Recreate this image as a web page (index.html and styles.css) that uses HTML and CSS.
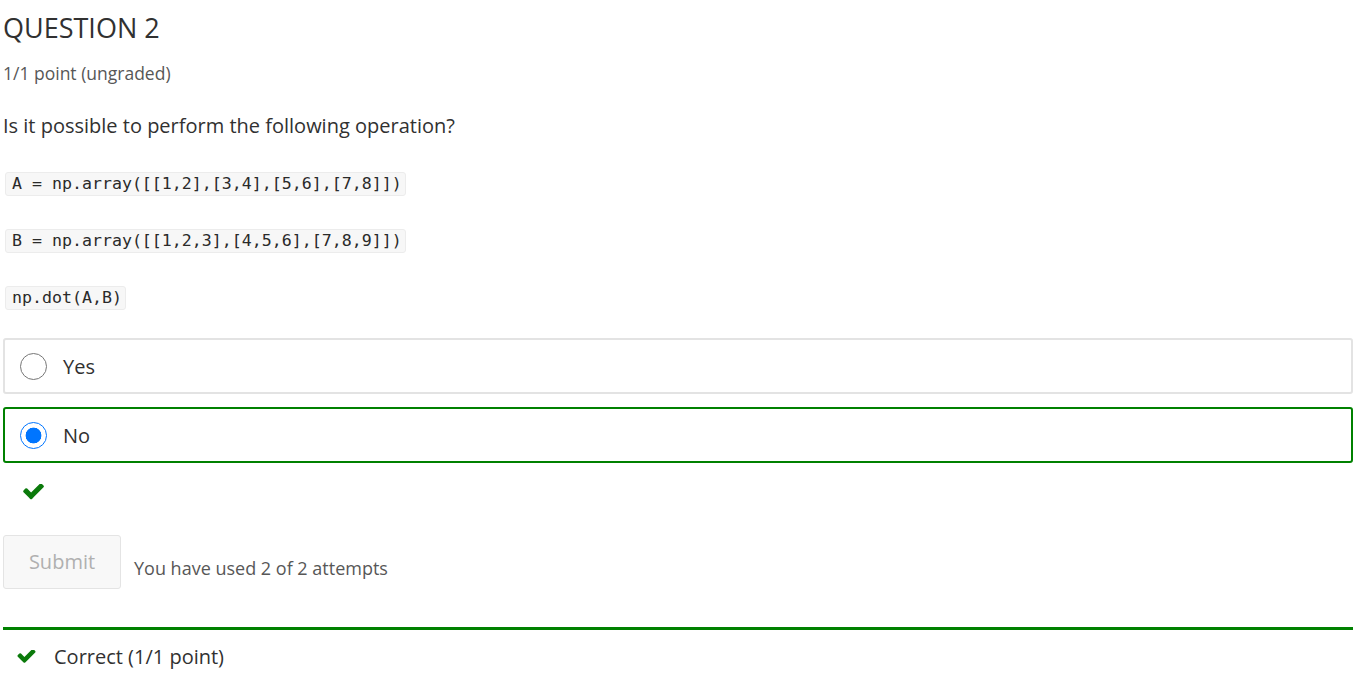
FILE: index.html
```html
<!DOCTYPE html>
<html>
<head>
<meta charset="utf-8">
<link rel="stylesheet" href="styles.css">
</head>
<body>
<div class="problem">
  <h3 class="title">QUESTION 2</h3>
  <div class="points">1/1 point (ungraded)</div>
  <p class="prompt">Is it possible to perform the following operation?</p>
  <p class="code-line"><code>A = np.array([[1,2],[3,4],[5,6],[7,8]])</code></p>
  <p class="code-line"><code>B = np.array([[1,2,3],[4,5,6],[7,8,9]])</code></p>
  <p class="code-line"><code>np.dot(A,B)</code></p>
  <div class="choices">
    <label class="choice">
      <span class="radio"></span>
      <span class="choice-text">Yes</span>
    </label>
    <label class="choice choice-correct">
      <span class="radio radio-checked"></span>
      <span class="choice-text">No</span>
    </label>
  </div>
  <div class="status-icon">
    <svg width="21" height="16" viewBox="110 420 1570 1120"><path fill="#0b7a0b" d="M1671 566q0 40-28 68l-724 724-136 136q-28 28-68 28t-68-28l-136-136-362-362q-28-28-28-68t28-68l136-136q28-28 68-28t68 28l294 295 656-657q28-28 68-28t68 28l136 136q28 28 28 68z"/></svg>
  </div>
  <div class="actions">
    <button class="submit" disabled>Submit</button>
    <span class="attempts">You have used 2 of 2 attempts</span>
  </div>
  <div class="notification">
    <svg class="notif-icon" width="19" height="13" viewBox="110 420 1570 1120"><path fill="#0b7a0b" d="M1671 566q0 40-28 68l-724 724-136 136q-28 28-68 28t-68-28l-136-136-362-362q-28-28-28-68t28-68l136-136q28-28 68-28t68 28l294 295 656-657q28-28 68-28t68 28l136 136q28 28 28 68z"/></svg>
    <span class="notif-text">Correct (1/1 point)</span>
  </div>
</div>
</body>
</html>
```
FILE: styles.css
```css
html, body {
  margin: 0;
  padding: 0;
  background: #fff;
}
body {
  font-family: "Open Sans", "Liberation Sans", sans-serif;
  color: #313131;
}
.problem {
  width: 1350px;
  margin-left: 3px;
}
.title {
  margin: 0;
  padding-top: 10px;
  font-size: 27px;
  font-weight: 400;
  line-height: 36px;
  color: #313131;
}
.points {
  margin-top: 16px;
  font-size: 17.5px;
  line-height: 22px;
  color: #575757;
}
.prompt {
  margin: 29px 0 0 0;
  font-size: 20px;
  line-height: 26px;
}
.code-line {
  margin: 0;
  padding-left: 2px;
  line-height: 24px;
}
.code-line:nth-of-type(2) { margin-top: 32px; }
.code-line:nth-of-type(3) { margin-top: 32px; }
.code-line:nth-of-type(4) { margin-top: 32px; }
code {
  display: inline-block;
  font-family: "DejaVu Sans Mono", "Liberation Mono", monospace;
  font-size: 16.6px;
  line-height: 22px;
  padding: 0 3px 0 6px;
  background: #f7f7f7;
  border: 1px solid #ececec;
  border-radius: 3px;
  color: #2a2a2a;
}
.choices {
  margin-top: 28px;
  display: flex;
  flex-direction: column;
  gap: 13px;
}
.choice {
  display: flex;
  align-items: center;
  height: 52px;
  border: 2px solid #e3e3e3;
  border-radius: 3px;
  padding-left: 15px;
}
.choice-correct {
  border-color: #008100;
}
.radio {
  width: 27px;
  height: 27px;
  border: 1.5px solid #767676;
  border-radius: 50%;
  box-sizing: border-box;
  flex: none;
}
.radio-checked {
  border: 1.5px solid #0075ff;
  background: radial-gradient(circle closest-side, #0075ff 0 7.6px, #fff 8.2px);
}
.choice-text {
  margin-left: 16px;
  font-size: 20px;
  color: #313131;
}
.status-icon {
  height: 24px;
  margin-top: 17px;
  padding-left: 20px;
  display: flex;
  align-items: center;
}
.actions {
  margin-top: 31px;
  display: flex;
  align-items: flex-end;
  height: 54px;
}
.submit {
  width: 118px;
  height: 54px;
  box-sizing: border-box;
  font-family: "Open Sans", "Liberation Sans", sans-serif;
  font-size: 20px;
  color: #b0b0b0;
  background: #f8f8f8;
  border: 1px solid #e4e4e4;
  border-radius: 3px;
  padding: 0 0 2px 0;
}
.attempts {
  margin-left: 13px;
  font-size: 18px;
  color: #575757;
  line-height: 24px;
  padding-bottom: 9px;
}
.notification {
  margin-top: 38px;
  border-top: 3px solid #008100;
  display: flex;
  align-items: center;
  height: 52px;
  padding-left: 14px;
  padding-top: 3px;
  box-sizing: border-box;
}
.notif-text {
  margin-left: 18px;
  font-size: 20px;
  color: #313131;
}
```
